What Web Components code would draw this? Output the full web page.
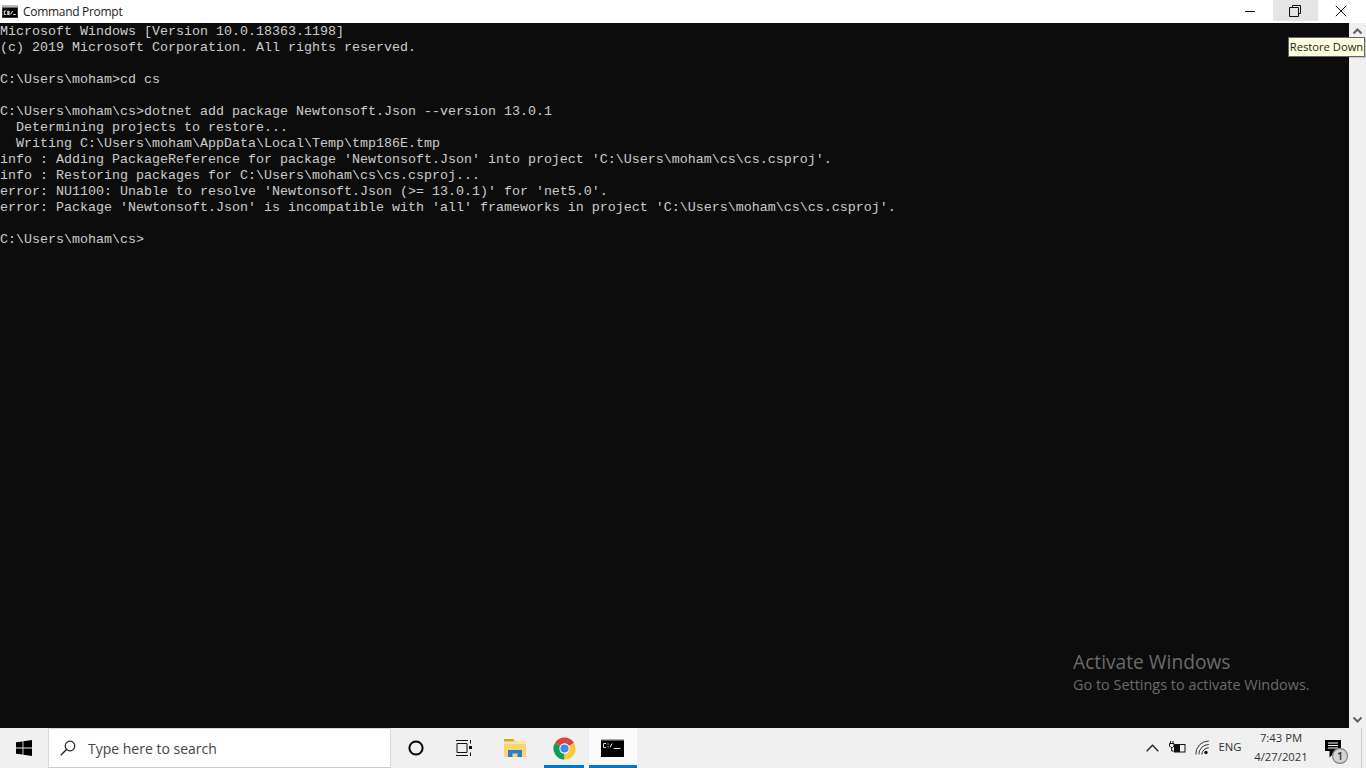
<!DOCTYPE html>
<html><head><meta charset="utf-8">
<style>
html,body{margin:0;padding:0;height:100%;overflow:hidden;background:#0c0c0c}
body{display:flex;flex-direction:column;width:1366px;height:768px;position:relative;font-family:"Open Sans","Noto Sans",sans-serif}
</style></head>
<body>
<win-titlebar></win-titlebar>
<console-pane>Microsoft Windows [Version 10.0.18363.1198]
(c) 2019 Microsoft Corporation. All rights reserved.

C:\Users\moham&gt;cd cs

C:\Users\moham\cs&gt;dotnet add package Newtonsoft.Json --version 13.0.1
  Determining projects to restore...
  Writing C:\Users\moham\AppData\Local\Temp\tmp186E.tmp
info : Adding PackageReference for package 'Newtonsoft.Json' into project 'C:\Users\moham\cs\cs.csproj'.
info : Restoring packages for C:\Users\moham\cs\cs.csproj...
error: NU1100: Unable to resolve 'Newtonsoft.Json (&gt;= 13.0.1)' for 'net5.0'.
error: Package 'Newtonsoft.Json' is incompatible with 'all' frameworks in project 'C:\Users\moham\cs\cs.csproj'.

C:\Users\moham\cs&gt;</console-pane>
<win-taskbar></win-taskbar>
<win-tooltip>Restore Down</win-tooltip>
<activate-mark></activate-mark>
<script>
function def(name, html){
  customElements.define(name, class extends HTMLElement{
    constructor(){super();this.attachShadow({mode:'open'}).innerHTML=html;}
  });
}
def('win-titlebar',`<style>
:host{display:flex;flex:none;height:23px;background:#fff;color:#1a1a1a;align-items:stretch}
.ic{width:16px;height:13px;margin:5px 0 0 2px;flex:none}
.t{margin-left:5px;font:12px/23px "Open Sans",sans-serif;letter-spacing:-.3px;flex:1;white-space:nowrap;color:#222}
.b{width:45px;height:21px;display:flex;align-items:center;justify-content:center;flex:none}
.b svg{width:12px;height:12px;display:block}
.b.n svg{margin-right:1px}
.b.h{background:#e5e5e5}
.s{width:3px;flex:none}
</style>
<svg class="ic" viewBox="0 0 16 13"><rect width="16" height="13" fill="#3a3a3a"/><rect x="1" y="3" width="14" height="9" fill="#000"/><rect x="0" y="0" width="16" height="2.4" fill="#b9b9b9"/><path d="M2.3 6h2M2.3 6v3.5h2M5.6 6.2h1.6v1.2H5.6zM5.600 8.400h1.600v1.200H5.600zM8.600 9.500l2-3.500M11.200 9.500h2.600" stroke="#e8e8e8" stroke-width="1" fill="none"/></svg>
<div class="t">Command Prompt</div>
<div class="b n"><svg viewBox="0 0 12 12"><path d="M1 6.500h10" stroke="#111" stroke-width="1"/></svg></div>
<div class="b n h"><svg viewBox="0 0 12 12"><path d="M3.500 2.500V.5h8v8h-2M.5 2.500h9v9h-9z" stroke="#111" stroke-width="1" fill="none"/></svg></div>
<div class="b"><svg viewBox="0 0 12 12"><path d="M.8.8l10.400 10.400M11.200.8L.8 11.200" stroke="#111" stroke-width="1" fill="none"/></svg></div>
<div class="s"></div>`);
def('console-pane',`<style>
:host{display:flex;flex:1;min-height:0;background:#0c0c0c}
pre{margin:0;padding-top:1px;flex:1;font:13.333px/16px "Liberation Mono",monospace;color:#ccc;overflow:hidden}
.sb{width:17px;flex:none;background:#f0f0f0;display:flex;flex-direction:column;justify-content:space-between;align-items:center}
.sb svg{width:17px;height:17px;display:block}
</style>
<pre><slot></slot></pre>
<div class="sb">
<svg viewBox="0 0 17 17"><path d="M4.500 10.500l4-4 4 4" stroke="#606060" stroke-width="2" fill="none"/></svg>
<svg viewBox="0 0 17 17"><path d="M4.500 6.500l4 4 4-4" stroke="#606060" stroke-width="2" fill="none"/></svg>
</div>`);
def('win-taskbar',`<style>
:host{display:flex;flex:none;height:40px;background:#f0f0f0;align-items:stretch;color:#222;font-family:"Open Sans",sans-serif}
.start{width:48px;display:flex;align-items:center;justify-content:center;flex:none}
.search{background:#fff;border:1px solid #d8d8d8;border-bottom-color:#ccc;box-sizing:border-box;display:flex;align-items:center;flex:none;margin-right:1px;width:343px;padding-left:11px;gap:12px;font-size:14px;color:#444}
.slot{width:48px;display:flex;align-items:center;justify-content:center;flex:none;position:relative}
.slot.on::after{content:"";position:absolute;left:0;right:0;bottom:0;height:3px;background:#0078d7}
.slot.inset::after{left:4px;right:4px}
.slot.active{background:#fafafa}
.m3{margin-left:3px}.m1{margin-left:1px}
.grow{flex:1}
.tray{display:flex;align-items:center;flex:none}
.lang{font-size:11.3px;width:24px;text-align:center;color:#333;margin-top:-3px}
.clock{width:78px;text-align:center;font-size:11.3px;line-height:19px;color:#333;margin-top:-2px}
.noti{width:41px;height:40px;display:flex;align-items:center;justify-content:flex-start;padding-left:4px;box-sizing:border-box}
.peek{width:5px;height:40px;border-left:1px solid #cdcdcd;box-sizing:border-box}
.ti{display:flex;align-items:center;justify-content:center;width:18px;margin-right:7px;margin-top:-1px}
</style>
<div class="start"><svg width="16" height="16" viewBox="0 0 16 16"><path d="M0 2.300l6.600-.9v6.200H0zM7.400 1.300L16 0v7.600H7.400zM0 8.400h6.600v6.200L0 13.700zM7.400 8.400H16V16l-8.600-1.300z" fill="#000"/></svg></div>
<div class="search"><svg width="16" height="16" viewBox="0 0 16 16"><circle cx="10" cy="6" r="4.800" fill="none" stroke="#222" stroke-width="1.200"/><path d="M6.500 9.500L.8 15.200" stroke="#222" stroke-width="1.400"/></svg><span>Type here to search</span></div>
<div class="slot"><svg width="16" height="16" viewBox="0 0 16 16"><circle cx="8" cy="8" r="6.600" fill="none" stroke="#000" stroke-width="2"/></svg></div>
<div class="slot"><svg width="16" height="16" viewBox="0 0 16 16"><path d="M0 .5h12M0 15.500h12M1 3.500h10v9H1zM14.500 0v3.500M14.500 12.500V16" stroke="#111" stroke-width="1" fill="none"/><rect x="13" y="6" width="3" height="3" fill="#111"/></svg></div>
<div class="slot m3"><svg width="22" height="18" viewBox="0 0 22 18"><path d="M0 0h9l2 2.500h11V18H0z" fill="#f7d774"/><path d="M0 0h9l2 2.500H0z" fill="#d9a02c"/><path d="M0 2.500h22V5H0z" fill="#fbe6a0"/><path d="M4 18v-7h14v7h-4.500v-3.500h-5V18z" fill="#2b7fc3"/></svg></div>
<div class="slot on inset m1"><svg width="23" height="23" viewBox="0 0 24 24"><path d="M12 12L2.040 6.250A11.500 11.500 0 0 1 21.960 6.250z" fill="#db4437"/><path d="M12 12L2.040 6.250A11.500 11.500 0 0 0 12 23.500z" fill="#0f9d58"/><path d="M12 12L21.960 6.250A11.500 11.500 0 0 1 12 23.500z" fill="#fcc934"/><circle cx="12" cy="12" r="5.400" fill="#fff"/><circle cx="12" cy="12" r="4.300" fill="#4285f4"/></svg></div>
<div class="slot on active m1"><svg width="23" height="18" viewBox="0 0 23 18" style="margin-right:2px"><rect width="23" height="18" fill="#000"/><rect width="23" height="1.500" fill="#aaa"/><path d="M2.500 4.500h2.500M2.500 4.500v4h2.500M6.500 5h1.200M6.500 7.800h1.200M9 8.500l2-4M12.500 9.500h7" stroke="#e0e0e0" stroke-width="1" fill="none"/></svg></div>
<div class="grow"></div>
<div class="tray">
<div class="ti"><svg width="13" height="8" viewBox="0 0 13 8"><path d="M.7 7.300l5.800-6 5.800 6" stroke="#222" stroke-width="1.300" fill="none"/></svg></div>
<div class="ti"><svg width="17" height="13" viewBox="0 0 17 13"><path d="M1.500 0v2.500M4 0v2.500M.5 2.500h4.500v2.500l-1.500 1.500h-1.500L.5 5zM2.700 6.500V10h2" stroke="#111" stroke-width="1" fill="none"/><rect x="5.500" y="3.500" width="10.500" height="7.500" fill="none" stroke="#111"/><rect x="6" y="4" width="5" height="7" fill="#111"/></svg></div>
<div class="ti"><svg width="15" height="15" viewBox="0 0 15 15"><path d="M.8 14.500A13 13 0 0 1 13.800 1M3.800 14.500A10 10 0 0 1 13.800 4.500M6.800 14.500A7 7 0 0 1 13.800 7.800" stroke="#333" stroke-width="1" fill="none"/><circle cx="11" cy="12.500" r="1.700" fill="#111"/></svg></div>
<div class="lang">ENG</div>
<div class="clock">7:43 PM<br>4/27/2021</div>
<div class="noti"><svg width="26" height="32" viewBox="0 0 26 32"><path d="M1 8h16v14H9l-3.500 3.500V19H1z" fill="#000"/><path d="M4 11h10M4 13.500h10M4 16h10" stroke="#fff" stroke-width="1"/><circle cx="16" cy="24" r="7.500" fill="#d4d4d4" stroke="#8a8a8a" stroke-width="1.300"/><text x="16" y="28" text-anchor="middle" font-size="11.500" font-family="Open Sans" font-weight="600" fill="#333">1</text></svg></div>
<div class="peek"></div>
</div>`);
def('win-tooltip',`<style>
:host{position:absolute;left:1288px;top:37px;width:77px;height:20px;box-sizing:border-box;background:#ffffe1;border:1px solid #646464;color:#222;font:11.2px/18px "Open Sans",sans-serif;text-align:center;white-space:nowrap;box-shadow:1px 1px 1px rgba(0,0,0,.15)}
</style><slot></slot>`);
def('activate-mark',`<style>
:host{position:absolute;left:1073px;top:649px;color:#6b6b6b;font-family:"Open Sans",sans-serif;white-space:nowrap}
.a{font-size:19.200px;line-height:26px}
.b{font-size:14.440px;line-height:20px}
</style><div class="a">Activate Windows</div><div class="b">Go to Settings to activate Windows.</div>`);
</script>
</body></html>
